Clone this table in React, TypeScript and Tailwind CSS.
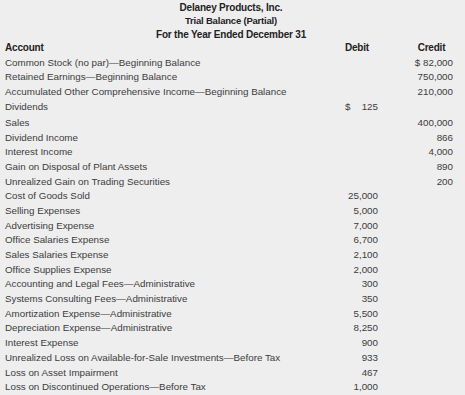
import React from "react";

type Row = { a: string; d?: string; c?: string; ds?: boolean; gap?: boolean };

const rows: Row[] = [
  { a: "Common Stock (no par)\u2014Beginning Balance", c: "$ 82,000" },
  { a: "Retained Earnings\u2014Beginning Balance", c: "750,000" },
  { a: "Accumulated Other Comprehensive Income\u2014Beginning Balance", c: "210,000" },
  { a: "Dividends", d: "125", ds: true },
  { a: "Sales", c: "400,000", gap: true },
  { a: "Dividend Income", c: "866" },
  { a: "Interest Income", c: "4,000" },
  { a: "Gain on Disposal of Plant Assets", c: "890" },
  { a: "Unrealized Gain on Trading Securities", c: "200" },
  { a: "Cost of Goods Sold", d: "25,000" },
  { a: "Selling Expenses", d: "5,000" },
  { a: "Advertising Expense", d: "7,000" },
  { a: "Office Salaries Expense", d: "6,700" },
  { a: "Sales Salaries Expense", d: "2,100" },
  { a: "Office Supplies Expense", d: "2,000" },
  { a: "Accounting and Legal Fees\u2014Administrative", d: "300" },
  { a: "Systems Consulting Fees\u2014Administrative", d: "350" },
  { a: "Amortization Expense\u2014Administrative", d: "5,500" },
  { a: "Depreciation Expense\u2014Administrative", d: "8,250" },
  { a: "Interest Expense", d: "900" },
  { a: "Unrealized Loss on Available-for-Sale Investments\u2014Before Tax", d: "933" },
  { a: "Loss on Asset Impairment", d: "467" },
  { a: "Loss on Discontinued Operations\u2014Before Tax", d: "1,000" },
];

export default function App() {
  return (
    <div
      className="w-[465px] h-[395px] bg-[#eeeeee] text-[#3c3c3c] overflow-hidden pt-[1px]"
      style={{ fontFamily: '"Liberation Sans", Arial, sans-serif' }}
    >
      <div className="w-[462px] text-center font-bold text-[#222] tracking-[-0.2px]">
        <div className="h-[13.3px] leading-[13.3px] text-[10px]">Delaney Products, Inc.</div>
        <div className="h-[13.3px] leading-[13.3px] text-[9.5px]">Trial Balance (Partial)</div>
        <div className="h-[13.3px] leading-[13.3px] text-[10px]">For the Year Ended December 31</div>
      </div>
      <div className="grid grid-cols-[331px_42px_32px_43px] pl-[5px] h-[14.7px] leading-[14.7px] text-[10px] font-bold text-[#222] tracking-[-0.2px]">
        <div>Account</div>
        <div className="text-center">Debit</div>
        <div />
        <div className="text-center">Credit</div>
      </div>
      {rows.map((r, i) => (
        <div
          key={i}
          className={
            "grid grid-cols-[331px_42px_32px_43px] pl-[5px] h-[14.7px] leading-[14.7px] text-[9.8px] " +
            (r.gap ? "mt-[1.5px]" : "")
          }
        >
          <div className="whitespace-nowrap">{r.a}</div>
          <div className="flex justify-between pl-[9px] whitespace-nowrap">
            <span>{r.ds ? "$" : ""}</span>
            <span>{r.d ?? ""}</span>
          </div>
          <div />
          <div className="text-right whitespace-nowrap">{r.c ?? ""}</div>
        </div>
      ))}
    </div>
  );
}
